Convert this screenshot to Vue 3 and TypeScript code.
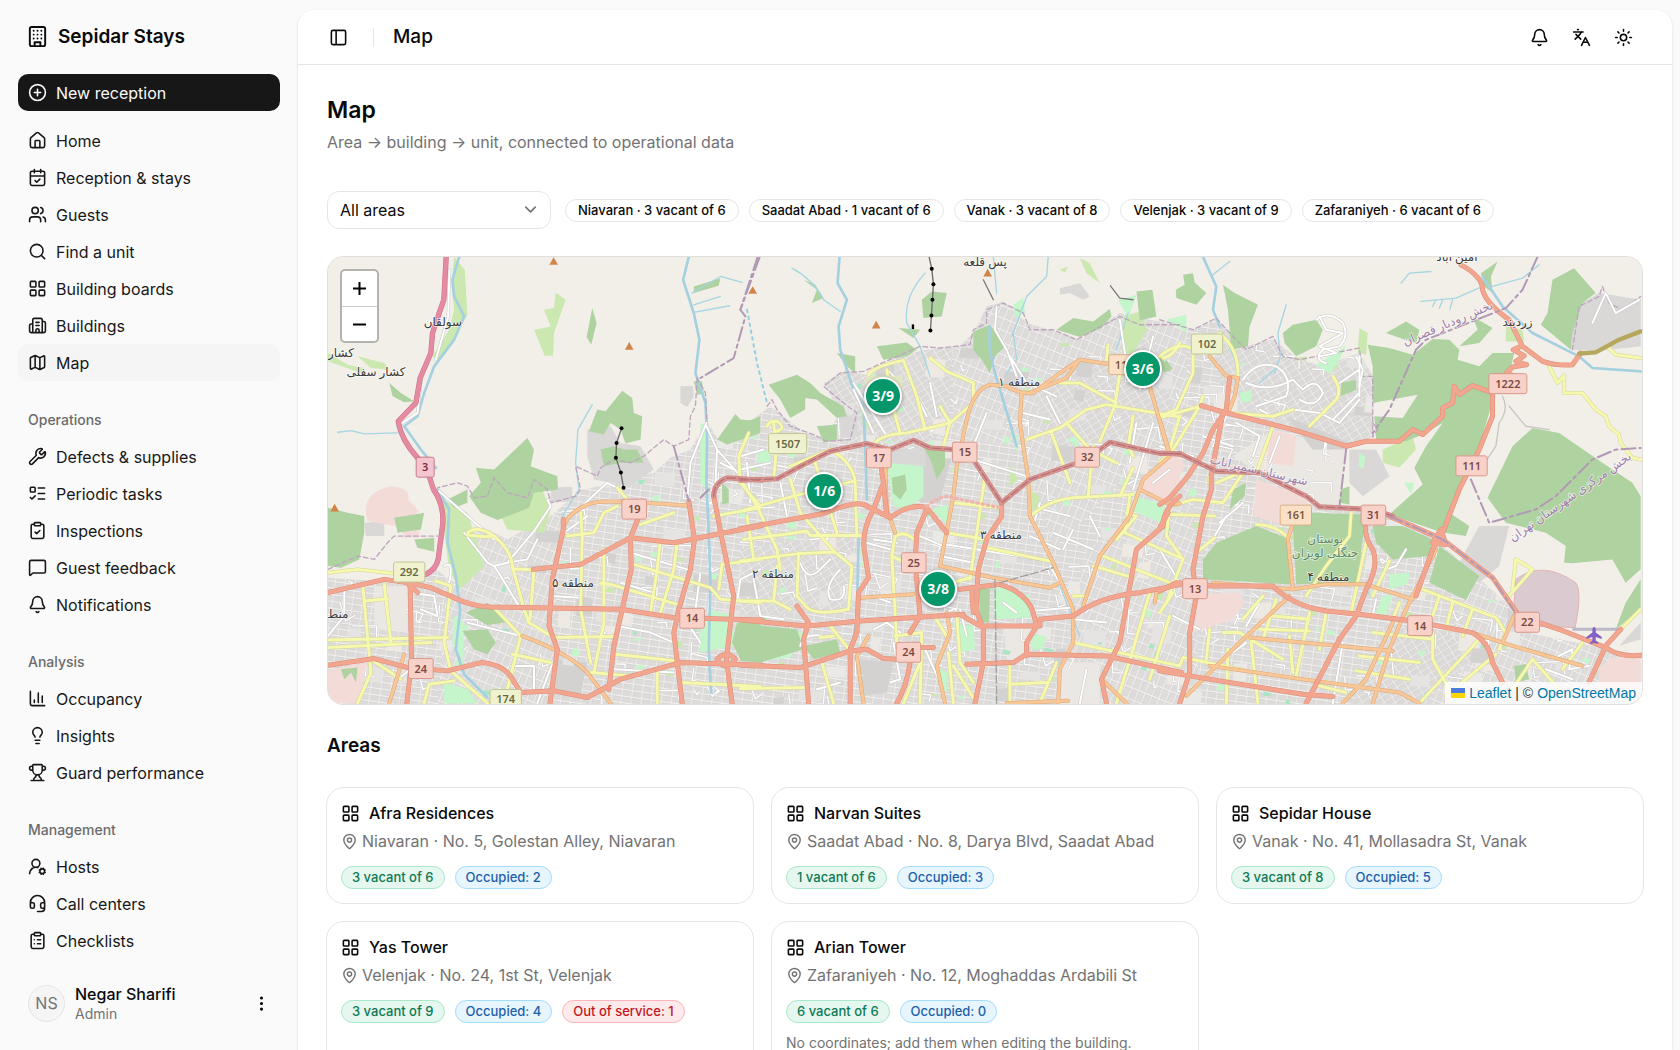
<script setup lang="ts">
import { h, ref } from 'vue'

const rr = (x: number, y: number, w: number, ht: number, r: number): string =>
  `M${x + r} ${y}h${w - 2 * r}a${r} ${r} 0 0 1 ${r} ${r}v${ht - 2 * r}a${r} ${r} 0 0 1 -${r} ${r}h-${w - 2 * r}a${r} ${r} 0 0 1 -${r} -${r}v-${ht - 2 * r}a${r} ${r} 0 0 1 ${r} -${r}z`
const circ = (x: number, y: number, r: number): string =>
  `M${x - r} ${y}a${r} ${r} 0 1 0 ${2 * r} 0a${r} ${r} 0 1 0 -${2 * r} 0`

const clipboard = `${rr(8, 2, 8, 4, 1)}M16 4h2a2 2 0 0 1 2 2v14a2 2 0 0 1-2 2H6a2 2 0 0 1-2-2V6a2 2 0 0 1 2-2h2`

const icons: Record<string, string> = {
  building: `${rr(4, 2, 16, 20, 2)}M9 22v-4h6v4M8 6h.01M16 6h.01M12 6h.01M12 10h.01M12 14h.01M16 10h.01M16 14h.01M8 10h.01M8 14h.01`,
  plus: `${circ(12, 12, 10)}M8 12h8M12 8v8`,
  home: 'M15 21v-8a1 1 0 0 0-1-1h-4a1 1 0 0 0-1 1v8M3 10a2 2 0 0 1 .709-1.528l7-5.999a2 2 0 0 1 2.582 0l7 5.999A2 2 0 0 1 21 10v9a2 2 0 0 1-2 2H5a2 2 0 0 1-2-2z',
  calendar: `M8 2v4M16 2v4${rr(3, 4, 18, 18, 2)}M3 10h18M9 16l2 2 4-4`,
  users: `M16 21v-2a4 4 0 0 0-4-4H6a4 4 0 0 0-4 4v2${circ(9, 7, 4)}M22 21v-2a4 4 0 0 0-3-3.87M16 3.13a4 4 0 0 1 0 7.75`,
  search: `M21 21l-4.34-4.34${circ(11, 11, 8)}`,
  grid: `${rr(3, 3, 7, 7, 1)}${rr(14, 3, 7, 7, 1)}${rr(14, 14, 7, 7, 1)}${rr(3, 14, 7, 7, 1)}`,
  buildings: 'M10 12h4M10 8h4M14 21v-3a2 2 0 0 0-4 0v3M6 10H4a2 2 0 0 0-2 2v7a2 2 0 0 0 2 2h16a2 2 0 0 0 2-2V9a2 2 0 0 0-2-2h-2M6 21V5a2 2 0 0 1 2-2h8a2 2 0 0 1 2 2v16',
  map: 'M14.106 5.553a2 2 0 0 0 1.788 0l3.659-1.83A1 1 0 0 1 21 4.619v12.764a1 1 0 0 1-.553.894l-4.553 2.277a2 2 0 0 1-1.788 0l-4.212-2.106a2 2 0 0 0-1.788 0l-3.659 1.83A1 1 0 0 1 3 19.381V6.618a1 1 0 0 1 .553-.894l4.553-2.277a2 2 0 0 1 1.788 0zM15 5.764v15M9 3.236v15',
  wrench: 'M14.7 6.3a1 1 0 0 0 0 1.4l1.6 1.6a1 1 0 0 0 1.4 0l3.106-3.105c.32-.322.863-.22.983.218a6 6 0 0 1-8.259 7.057l-7.91 7.91a1 1 0 0 1-2.999-3l7.91-7.91a6 6 0 0 1 7.057-8.259c.438.12.54.662.219.984z',
  todo: `${rr(3, 4, 6, 6, 1)}M3 17l2 2 4-4M13 5h8M13 12h8M13 19h8`,
  inspect: `${clipboard}M9 14l2 2 4-4`,
  message: 'M22 17a2 2 0 0 1-2 2H6.828a2 2 0 0 0-1.414.586l-2.202 2.202A.71.71 0 0 1 2 21.286V5a2 2 0 0 1 2-2h16a2 2 0 0 1 2 2z',
  bell: 'M10.268 21a2 2 0 0 0 3.464 0M3.262 15.326A1 1 0 0 0 4 17h16a1 1 0 0 0 .74-1.673C19.41 13.956 18 12.499 18 8A6 6 0 0 0 6 8c0 4.499-1.411 5.956-2.738 7.326',
  chart: 'M3 3v16a2 2 0 0 0 2 2h16M18 17V9M13 17V5M8 17v-3',
  bulb: 'M15 14c.2-1 .7-1.7 1.5-2.5 1-.9 1.5-2.2 1.5-3.5A6 6 0 0 0 6 8c0 1 .2 2.2 1.5 3.5.7.7 1.3 1.5 1.5 2.5M9 18h6M10 22h4',
  trophy: 'M10 14.66v1.626a2 2 0 0 1-.976 1.696A5 5 0 0 0 7 21.978M14 14.66v1.626a2 2 0 0 0 .976 1.696A5 5 0 0 1 17 21.978M18 9h1.5a1 1 0 0 0 0-5H18M4 22h16M6 9a6 6 0 0 0 12 0V3a1 1 0 0 0-1-1H7a1 1 0 0 0-1 1zM6 9H4.5a1 1 0 0 1 0-5H6',
  host: `${circ(10, 8, 5)}M2 21a8 8 0 0 1 10.434-7.62${circ(18, 18, 3)}M14.305 19.53l.923-.382M15.228 16.852l-.923-.383M16.852 15.228l-.383-.923M16.852 20.772l-.383.924M19.148 15.228l.383-.923M19.53 21.696l-.382-.924M20.772 16.852l.924-.383M20.772 19.148l.924.383`,
  headset: 'M3 11h3a2 2 0 0 1 2 2v3a2 2 0 0 1-2 2H5a2 2 0 0 1-2-2v-5Zm0 0a9 9 0 1 1 18 0m0 0v5a2 2 0 0 1-2 2h-1a2 2 0 0 1-2-2v-3a2 2 0 0 1 2-2h3ZM21 16v2a4 4 0 0 1-4 4h-5',
  checklist: `${clipboard}M12 11h4M12 16h4M8 11h.01M8 16h.01`,
  panel: `${rr(3, 3, 18, 18, 2)}M9 3v18`,
  languages: 'M5 8l6 6M4 14l6-6 2-3M2 5h12M7 2h1M22 22l-5-10-5 10M14 18h6',
  sun: `${circ(12, 12, 4)}M12 2v2M12 20v2M4.93 4.93l1.41 1.41M17.66 17.66l1.41 1.41M2 12h2M20 12h2M6.34 17.66l-1.41 1.41M19.07 4.93l-1.41 1.41`,
  pin: `M20 10c0 4.993-5.539 10.193-7.399 11.799a1 1 0 0 1-1.202 0C9.539 20.193 4 14.993 4 10a8 8 0 0 1 16 0${circ(12, 10, 3)}`,
  more: `${circ(12, 12, 1)}${circ(12, 5, 1)}${circ(12, 19, 1)}`,
  chevron: 'M6 9l6 6 6-6',
}

const Icon = (props: { name: string; size?: number }) =>
  h(
    'svg',
    {
      width: props.size ?? 19,
      height: props.size ?? 19,
      viewBox: '0 0 24 24',
      fill: 'none',
      stroke: 'currentColor',
      'stroke-width': 2,
      'stroke-linecap': 'round',
      'stroke-linejoin': 'round',
      'aria-hidden': 'true',
      class: 'icon',
    },
    [h('path', { d: icons[props.name] })],
  )
Icon.props = ['name', 'size']

interface NavItem { icon: string; label: string }
interface NavGroup { title?: string; items: NavItem[] }

const groups: NavGroup[] = [
  {
    items: [
      { icon: 'home', label: 'Home' },
      { icon: 'calendar', label: 'Reception & stays' },
      { icon: 'users', label: 'Guests' },
      { icon: 'search', label: 'Find a unit' },
      { icon: 'grid', label: 'Building boards' },
      { icon: 'buildings', label: 'Buildings' },
      { icon: 'map', label: 'Map' },
    ],
  },
  {
    title: 'Operations',
    items: [
      { icon: 'wrench', label: 'Defects & supplies' },
      { icon: 'todo', label: 'Periodic tasks' },
      { icon: 'inspect', label: 'Inspections' },
      { icon: 'message', label: 'Guest feedback' },
      { icon: 'bell', label: 'Notifications' },
    ],
  },
  {
    title: 'Analysis',
    items: [
      { icon: 'chart', label: 'Occupancy' },
      { icon: 'bulb', label: 'Insights' },
      { icon: 'trophy', label: 'Guard performance' },
    ],
  },
  {
    title: 'Management',
    items: [
      { icon: 'host', label: 'Hosts' },
      { icon: 'headset', label: 'Call centers' },
      { icon: 'checklist', label: 'Checklists' },
    ],
  },
]

const area = ref('All areas')
const areas = [
  { name: 'Niavaran', vacant: 3, total: 6 },
  { name: 'Saadat Abad', vacant: 1, total: 6 },
  { name: 'Vanak', vacant: 3, total: 8 },
  { name: 'Velenjak', vacant: 3, total: 9 },
  { name: 'Zafaraniyeh', vacant: 6, total: 6 },
]

interface Building { name: string; address: string; vacant: string; occupied: number; out?: number; note?: string }
const buildings: Building[] = [
  { name: 'Afra Residences', address: 'Niavaran · No. 5, Golestan Alley, Niavaran', vacant: '3 vacant of 6', occupied: 2 },
  { name: 'Narvan Suites', address: 'Saadat Abad · No. 8, Darya Blvd, Saadat Abad', vacant: '1 vacant of 6', occupied: 3 },
  { name: 'Sepidar House', address: 'Vanak · No. 41, Mollasadra St, Vanak', vacant: '3 vacant of 8', occupied: 5 },
  { name: 'Yas Tower', address: 'Velenjak · No. 24, 1st St, Velenjak', vacant: '3 vacant of 9', occupied: 4, out: 1 },
  { name: 'Arian Tower', address: 'Zafaraniyeh · No. 12, Moghaddas Ardabili St', vacant: '6 vacant of 6', occupied: 0, note: 'No coordinates; add them when editing the building.' },
]

/* Map geometry: three tiles side by side, each with its own origin. */
const tiles = [0, 1260, 2520]
const urban =
  'M21 985L240 1000L345 960L400 1000L470 900L440 860L480 830L560 870L690 800L780 722L880 700L1000 670L1050 625L1110 600L1160 515L1200 580L1350 470L1440 540L1510 570L1560 490L1510 400L1580 360L1650 380L1730 320L1820 300L1920 290L1960 250L2000 170L2050 155L2120 220L2220 250L2280 270L2400 190L2440 200L2540 220L2620 240L2690 210L2780 290L2860 270L2940 330L3010 350L3120 310L3160 380L3160 560L3080 600L3060 770L3220 800L3350 870L3560 1060L3620 1150L3965 1220L3965 1370L21 1370Z'

const wood: string[][] = [
  [
    'M620 565L640 600 630 650 710 680 712 720 640 730 625 775 530 812 480 790 445 740 480 700 465 655 520 660Z',
    'M905 423L935 445 940 490 965 500 960 570 915 582 900 540 870 520 850 555 805 545 830 480 855 485Z',
    'M880 590L910 600 950 600 970 640 900 640 850 650 840 600Z',
    'M21 775L80 790 130 800 130 850 115 930 60 955 21 950Z', 'M220 805L280 795 310 790 300 840 230 850Z',
    'M280 870L340 865 340 907 290 895Z', 'M435 1090L500 1060 560 1118 500 1128Z', 'M425 1145L500 1140 525 1180 500 1215 460 1200Z',
    'M1190 570L1245 493 1270 520 1320 500 1320 550 1220 585Z', 'M1120 395L1145 395 1150 432 1130 435Z',
    'M1250 1120L1320 1120 1320 1235 1260 1230 1235 1180Z', 'M1205 700L1225 720 1225 760 1205 765Z',
    'M1120 110L1200 85 1195 108 1120 130Z', 'M380 750L440 720 440 760 400 775Z', 'M815 175L828 220 812 285 798 262Z',
    'M205 400L240 430 280 455 250 458 215 440Z', 'M60 1260L110 1255 105 1300 90 1270 70 1290Z',
  ],
  [
    'M85 405L170 375 210 400 240 430 310 470 320 500 290 505 230 450 195 445 195 480 150 505 120 450Z',
    'M700 245L750 225 795 290 765 320 750 370 725 330 700 300Z', 'M0 510L60 515 50 550 0 565Z',
    'M230 530L290 525 290 570 250 580Z', 'M575 125L620 130 605 200 550 205 545 150Z', 'M190 90L225 105 250 145 215 160 230 120Z',
    'M950 240L1000 205 1060 215 1110 178 1115 200 1085 235 1020 262Z', 'M1190 125L1238 120 1250 200 1200 212Z',
    'M0 1120L70 1130 170 1140 190 1200 60 1240 0 1235Z', 'M190 1190L290 1170 300 1210 220 1230Z', 'M410 290L500 278 530 300 500 320 430 330Z',
    'M715 1010L750 1020 747 1120 720 1120Z', 'M550 590L615 590 615 650 590 690 575 640Z', 'M455 685L495 675 500 720 480 750 458 730Z',
    'M475 235L540 240 520 265Z', 'M290 310L345 320 345 370 320 350Z', 'M1280 330L1300 360 1270 345Z',
  ],
  [
    'M625 285L690 295 760 315 820 268 870 270 900 300 895 330 960 350 1000 310 1065 310 1050 375 1000 430 990 490 960 590 905 700 850 850 690 795 790 705 765 655 800 590 850 520 790 555 740 575 650 570 645 500 730 505 775 435 640 460 640 350Z',
    'M985 745L1060 590 1120 535 1200 550 1330 640 1420 700 1445 740 1445 960 1400 1000 1360 930 1240 942 1215 940 1220 890 1160 850 1040 820Z',
    'M1180 90L1245 55 1310 130 1270 160 1240 250 1235 300 1145 225 1165 190Z', 'M190 105L225 130 295 165 270 230 265 290 215 300 205 180Z',
    'M370 250L400 225 470 210 490 240 470 290 410 320 375 280Z', 'M70 75L100 70 105 98 140 130 110 165 50 145 48 120 75 105Z',
    'M680 250L740 215 780 240 770 282Z', 'M940 200L1000 235 960 280 900 290 955 240Z', 'M130 930L170 880 290 830 380 865 395 1005 130 990Z',
    'M450 790L620 795 605 900 600 1000 410 1005 400 830Z', 'M640 830L730 830 820 870 810 920 700 930 650 880Z',
    'M840 890L960 980 920 1052 810 1000Z', 'M1370 1140L1400 1060 1445 990 1445 1080Z', 'M0 320L35 360 15 370 0 350Z',
    'M855 850L870 790 930 830 920 860Z', 'M545 400L590 390 590 420 545 440Z', 'M1065 1250L1100 1245 1110 1290 1070 1300Z',
    'M965 70L1015 35 995 80 1000 130 975 110Z', 'M545 720L570 710 570 765 540 760Z', 'M220 720L260 700 255 740 210 780Z',
  ],
]
const grass: string[][] = [
  [
    'M355 740L400 770 440 790 470 880 490 950 440 1000 415 1020 385 960Z', 'M400 21L432 60 440 195 400 270 350 335 335 320 385 240 400 180 392 100Z',
    'M705 128L735 150 700 250 697 318 672 318 640 240 690 230 670 180 700 175Z', 'M600 740L660 710 690 780 670 850 560 840 540 800Z',
    'M110 320L190 340 205 360 150 355Z', 'M21 310L80 345 130 355 120 370 21 335Z',
  ],
  ['M1150 200L1200 185 1222 240 1180 310 1148 310Z', 'M960 60L985 50 975 68Z', 'M1020 25L1050 40 1080 100 1040 70Z', 'M350 430L400 540 370 530Z', 'M870 720L900 740 900 780 875 780Z', 'M810 650L835 690 810 710Z'],
  ['M600 235L625 250 620 315 595 310Z', 'M1040 230L1090 240 1095 275 1040 275Z', 'M670 600L760 560 770 600 720 655 670 640Z', 'M400 325L440 320 440 335Z'],
]
const park: string[][] = [
  ['M1170 1080L1238 1100 1240 1190 1140 1210 1135 1160Z', 'M1140 520L1165 530 1160 720 1140 700Z', 'M370 1300L440 1320 470 1362 370 1362Z', 'M400 1100L430 1120 430 1240 395 1180Z', 'M940 900L965 930 945 940Z'],
  [
    'M440 640L550 650 550 740 500 780 460 770Z', 'M1185 740L1275 765 1262 820 1180 785Z', 'M820 165L850 145 855 190 825 205Z', 'M780 1010L870 1040 870 1105 765 1110 760 1030Z',
    'M640 1120L700 1130 705 1200 665 1210Z', 'M870 1155L920 1160 910 1200 875 1200Z', 'M1135 150L1190 135 1165 205Z', 'M980 570L1010 560 1020 600Z', 'M50 610L90 600 90 640 50 640Z',
    'M60 1145L190 1150 150 1225 60 1235Z', 'M575 780L620 765 625 830Z', 'M600 1260L625 1270 620 1330 598 1310Z', 'M810 540L835 560 830 610Z',
  ],
  ['M470 345L560 288 540 330 510 372Z', 'M690 975L750 970 745 1005 690 1020Z', 'M20 210L80 195 80 248Z', 'M240 430L275 420 275 455 245 460Z', 'M670 1040L700 1035 680 1100 650 1090Z', 'M0 770L15 770 10 830 0 830Z', 'M600 610L618 620 612 658 597 650Z', 'M735 700L765 700 755 735Z'],
]
const pink: string[][] = [
  ['M140 815Q115 730 210 710Q270 715 262 750L295 785 230 832Z', 'M21 1262L140 1240 110 1362 21 1362Z', 'M245 845L295 840 295 865 250 865Z'],
  ['M1210 690L1320 625 1320 720 1262 755 1200 725Z'],
  ['M335 540L410 558 400 650 320 640Z', 'M290 690L440 742 455 790 360 822 282 800Z', 'M0 622L60 615 75 650 30 740 0 755Z', 'M115 1035L240 1030 255 1060 220 1110 105 1148Z', 'M1320 1255L1360 1225 1445 1220 1445 1362 1320 1320Z'],
]
const grey: string[][] = [
  ['M1080 410L1118 408 1120 440 1100 472 1080 460Z', 'M800 540L870 530 900 580 960 590 1000 660 930 710 820 690 800 620Z', 'M690 715L755 712 755 755 690 760Z', 'M130 820L190 815 190 860 135 860Z'],
  ['M960 115L1020 100 1050 140 1030 150 990 130 960 135Z', 'M300 500L350 495 355 560 300 565Z', 'M450 610L550 590 560 650 450 650Z'],
  ['M1240 240L1260 165 1320 130 1445 150 1445 290 1310 305 1235 300Z', 'M570 600L650 600 690 680 610 740 570 700Z', 'M960 830L1050 830 1020 950 960 1000 900 940Z', 'M1380 1190L1445 1120 1445 1170Z'],
]

const river: string[][] = [
  ['M415 21L395 90 400 140 430 200 400 270 340 350 310 430 290 500 250 530 300 600 345 655', 'M350 720L385 780 380 880 405 980 418 1080 405 1200 430 1275 500 1345', 'M1105 21L1088 90 1120 190 1137 270 1125 370 1155 460 1160 560 1158 700 1165 850 1170 1000 1165 1200 1172 1330'],
  ['M298 21L292 100 320 150 295 230 300 300 340 420 370 470 375 600 380 750', 'M355 870L350 1100 335 1200', 'M750 230Q740 300 780 420L810 520 830 590'],
  ['M130 21L170 110 160 180 180 230', 'M970 80L1030 170 1120 250 1260 320 1300 355 1445 365'],
]
const stream: string[][] = [
  ['M815 465L772 540 765 640 775 720 725 800', 'M50 548L90 543 130 553 230 550', 'M1115 130L1200 80 1265 98', 'M1120 165L1200 140M1120 188L1228 168'],
  ['M155 55Q220 90 250 150L300 185', 'M555 70Q490 140 500 220L540 290 570 380', 'M925 21L920 80 860 140 835 210 815 260', 'M760 21L770 130', 'M1165 190L1130 300', 'M820 250L830 330 800 370', 'M960 1010L1020 1160'],
  ['M380 165L355 250 362 320 345 370', 'M785 155L890 145 965 112M830 150L820 170M850 152L840 175M880 148L872 178', 'M725 100L750 70 815 65', 'M1000 110L1090 85 1140 45', 'M210 35L160 75', 'M190 250L230 340', 'M355 350L300 400'],
]

const minor: string[][] = [
  [
    'M355 725L440 800 520 870M430 850L500 940 520 950 560 940 640 845 690 770 680 750M520 950L540 980 600 1080M560 940L620 930 650 870',
    'M800 800L730 850M730 820L860 700 900 720M1158 520L1110 640 1100 760M1158 530L1190 600 1185 700M1190 600L1260 680M1200 640L1240 660',
    'M21 1160L70 1100 70 1020M270 1030L340 1040 350 1100 300 1080M370 950Q400 930 385 1000M160 1230L230 1290 270 1260M440 1120L600 1160M690 1040L780 1045M700 1230L650 1362',
    'M930 910L1100 960M1100 1120L1140 1180M890 1130L990 1150 1060 1180M900 1000L1000 1030M1140 970L1120 1120M1250 1060L1260 990 1320 960M880 1260L1060 1270M570 1250L640 1250 640 1330',
    'M386 60L382 200 345 330M230 530L290 490 300 400',
  ],
  [
    'M20 640L30 760M0 660L90 640M0 620L70 600M120 700L140 800M180 940Q200 1000 240 960L270 930M300 960Q250 1010 270 1050 320 1060 310 1010M40 990L60 1100 130 1110',
    'M340 420L400 550M340 400L440 560M570 400L590 500M520 420L560 500 M400 870L470 880M380 880L450 900M770 170L765 240 800 300 830 380M810 320L860 400 950 440M920 440L960 520M850 490L930 510',
    'M740 490L700 590M700 630L860 680M900 760L880 830M910 780L990 800M1000 840L970 900M940 850L1060 900M870 860L960 900 M930 950L960 1000M870 1085L990 1075M1050 800L1080 860',
    'M620 885L930 935M540 860L610 890M600 920L700 940M660 1080L680 1160M400 1140L440 1120 480 1150M180 1190Q190 1150 250 1160M450 1300L480 1290 460 1180M555 1200L600 1300M1140 210L1160 340',
    'M1240 260L1200 420M1190 520L1170 640M1240 520L1180 720M1290 660L1240 700M1000 1110L1100 1120M1040 1260L1020 1362M230 1320L300 1300M400 1040L450 1060M790 1060L830 1090',
  ],
  [
    'M250 390Q290 330 350 350 400 380 380 440L290 470M260 400Q330 430 400 390L430 420Q470 380 490 430 470 480 420 450M400 480L480 490 540 520 600 450M300 480L340 500M540 400L600 360M600 320L600 440',
    'M470 210Q510 180 550 220 570 260 540 290L490 300Q460 330 500 340M480 200L500 240 550 250 480 290 530 310 480 320', 'M590 320L610 360 600 410M600 430L520 510M130 560L220 590M0 590L100 620M200 500L160 590M230 520L300 560 280 620',
    'M180 820L250 760M165 860L200 800M0 900L60 1000M40 1100L120 1140M300 1060L260 1130M550 1180L520 1362M1180 1230L1240 1200 1230 1260 1290 1250M1160 1260L1240 1290M740 900L710 950 680 960M260 1180L220 1210M650 1050L640 1100',
    'M1300 220L1340 130 1370 190 1440 150M360 560L330 640',
  ],
]
const yellow: string[][] = [
  [
    'M21 970L110 960 240 975', 'M21 1172L380 1165', 'M21 1195L330 1180', 'M125 1005L150 1270 110 1362', 'M190 1005L210 1180', 'M130 1055L200 1048', 'M390 1010L370 1180 390 1265 500 1362M345 995L390 1010',
    'M440 850Q470 825 520 860 570 900 575 950L610 1080 625 1120 700 1165 880 1162', 'M440 857L490 862 520 860', 'M575 958L640 962 628 1110', 'M520 1075L600 1160 560 1320', 'M780 790L785 860 780 1080 810 1240',
    'M740 860L820 850 850 790 890 770', 'M850 900L850 1120 820 1270', 'M840 1002L870 1005 1070 1065', 'M940 945L1170 1015 1200 1050 1320 1060', 'M1020 870L1010 960 990 1090', 'M1070 880L1060 960 1020 1090',
    'M885 1215L1070 1235', 'M810 1270L930 1280', 'M575 1215L690 1240', 'M1010 1260L1010 1362', 'M1080 1300L1320 1312', 'M1285 550L1255 620 1260 700 1320 770', 'M1180 800L1320 775', 'M1205 945L1320 930', 'M890 715L920 750', 'M960 825L1060 790', 'M310 1362L325 1305 400 1295', 'M150 1230L240 1290',
    'M1205 945L1195 1020',
  ],
  [
    'M0 690L50 770 110 900 120 960', 'M0 785L160 740 340 695', 'M10 870L130 855 200 845 210 858 362 858', 'M0 935L180 912 285 908 335 950 325 1080Q230 1100 200 1075L170 1040 175 910', 'M100 520L108 600 100 690M80 530Q90 510 110 515 140 535 110 545', 'M150 690L180 790 285 910',
    'M150 650L270 600Q340 640 345 700L350 860', 'M225 640L290 850', 'M20 800L40 930', 'M0 1055L100 1055 110 950', 'M100 1055L150 1080', 'M385 375Q400 350 490 332L530 440 555 540', 'M440 360Q450 450 480 550', 'M400 590Q410 555 500 550L630 520 700 460 700 400',
    'M570 325L620 365 700 400', 'M600 470L630 520 610 590', 'M860 570L960 535 1040 480 1100 465 1320 502', 'M1105 285L1100 330', 'M1140 370L1125 470 1080 575', 'M980 520L1050 600 1130 640', 'M935 550L990 700', 'M1060 590L1045 740', 'M870 800Q930 750 1000 745L1180 735', 'M1180 655L1140 740',
    'M960 400L1020 400 1130 460', 'M735 680L690 990', 'M640 760L780 775', 'M620 850L740 870', 'M740 895L930 935', 'M465 860L455 920 470 1180', 'M455 920L520 950', 'M465 860Q500 840 530 880', 'M465 1160L545 1150 540 1362', 'M580 1095L625 1170 600 1220', 'M650 1090L660 1240 700 1300', 'M625 1210L640 1362', 'M0 1318L200 1315',
    'M245 1240L280 1362', 'M270 1130L330 1205M240 1165L280 1160', 'M810 1240L810 1362', 'M1000 1180L1320 1250', 'M950 1240L900 1362', 'M810 1305L920 1300', 'M1170 740L1155 850 1320 925', 'M1160 790L1190 800M1190 800L1130 870', 'M1060 950L1180 985', 'M1090 920L1290 1000', 'M1230 1030L1180 1200 1130 1362', 'M1290 1100L1230 1290', 'M1320 500L1290 600', 'M1270 325Q1300 320 1320 280', 'M540 1240L490 1362M640 1250L710 1362M1180 500L1165 590 1180 620M690 985L640 1000M1000 1040L1040 1040',
  ],
  [
    'M0 320Q60 270 100 300L100 370 50 480 0 500', 'M180 250Q240 300 235 385', 'M0 505L120 470 130 440', 'M120 470L40 600 0 640', 'M340 530L290 670', 'M210 490L340 500 400 480', 'M520 380Q550 420 530 450L450 530', 'M250 670L190 760 100 750 30 770 20 860 70 930 20 1060', 'M35 795L165 800', 'M165 865L110 910',
    'M290 825Q350 825 390 870', 'M575 790L570 860 500 950 440 1040', 'M620 880L575 1090', 'M690 935L640 1040', 'M790 1020L1010 1105 1040 1150 1020 1200', 'M840 1040L810 1130', 'M880 1060L860 1140', 'M940 1080L910 1160', 'M1070 930L1060 1020M1070 930L1120 960 1045 1045',
    'M1170 350L1195 400 1215 378 1215 430 1270 430 1310 480 1340 500 1350 530 1380 555 1385 580 1420 625 1445 630', 'M1345 290L1370 315 1445 325', 'M1445 1080L1385 1140', 'M310 1040L250 1110', 'M350 1050L310 1170', 'M450 1090L410 1280', 'M340 1100L450 1110', 'M300 1140L450 1145', 'M500 1090L480 1200', 'M190 1150L240 1150 370 1230',
    'M60 1250L70 1225 250 1262', 'M275 1180L295 1362', 'M205 1200L200 1362', 'M820 1150L820 1230 870 1320', 'M640 1150L820 1170', 'M600 1220L780 1240', 'M590 1265L750 1290', 'M960 1170L780 1362', 'M1010 1215L860 1340', 'M1120 1230L1060 1320', 'M1120 1230L1200 1320', 'M1270 1180L1210 1260', 'M150 1140L140 1230', 'M390 1160L400 1270M720 1060L700 1110M0 1090L40 1030', 'M170 700L240 670M150 680L150 700', 'M480 1310L560 1330',
  ],
]
const orange: string[][] = [
  ['M900 757Q820 752 790 770 740 795 730 830', 'M900 755L1100 768', 'M250 1215L205 1362', 'M605 1160Q740 1210 800 1270L870 1362'],
  [
    'M845 430L840 520 865 690 870 800 940 940 1000 1080 1000 1180 960 1260 955 1362', 'M600 950L640 740 650 650 680 510Q700 420 750 405L800 410Q840 435 880 430L960 370 1020 330 1120 345', 'M870 430L980 385 1015 335', 'M600 950L760 985 930 1015 960 1000', 'M360 1045L520 1035',
    'M435 650L440 780 465 850', 'M1230 410L1290 620 1210 690 1170 800 1080 920 1030 1070', 'M1200 720L1290 765 1320 762', 'M385 1160L350 1220 370 1362', 'M620 1090L630 1150 590 1250 615 1362', 'M800 1362L985 1355M1085 1290L1160 1362M1320 1000L1250 1030 1245 1060',
  ],
  ['M150 320L200 380 235 385 225 440 205 490', 'M400 820L385 870 400 1020', 'M160 1000L400 1020 500 1005 620 1005 760 1050', 'M830 900L740 1080 690 1200 640 1362', 'M390 1040L240 1180 80 1340', 'M270 1165L700 1205', 'M700 1120L620 1290 550 1362', 'M940 1150L1060 1190 1270 1250', 'M150 1250L430 1290 720 1330 780 1362', 'M1065 1100L1030 1180', 'M0 510L28 605'],
]
const trunk: string[][] = [
  [
    'M21 1030L190 990 262 1000 330 1015 400 1045Q450 1070 510 1073L900 1080 1060 1105 1325 1112', 'M268 1010L272 1240 258 1362', 'M21 1248L160 1228 260 1255 380 1265 480 1240Q550 1245 575 1290L600 1330 700 1325 800 1345 900 1290 1080 1240 1325 1248',
    'M638 960L780 945 930 865 1060 880 1325 828', 'M728 810L728 840 695 990 685 1130 710 1200 688 1362', 'M930 865L932 960 905 1080 880 1190 865 1320', 'M1105 755L1122 870 1110 960 1075 1080 1060 1150 1085 1362', 'M1180 740L1205 870 1240 1040 1218 1230 1235 1362', 'M955 800L930 865', 'M240 985L290 1030M1190 1230Q1218 1200 1245 1230 1218 1270 1190 1230',
  ],
  [
    'M0 838L250 792Q340 755 370 765L450 805', 'M420 640L430 700 400 780Q365 840 372 900L385 985 355 1030 350 1150 330 1200 330 1362', 'M430 700L440 800 370 765', 'M450 805Q510 760 560 775L620 850', 'M560 780L530 850 525 940 540 1100 510 1150', 'M785 760L785 800 740 870 715 960 708 1080 730 1140 730 1240 705 1362',
    'M660 1020L780 1005Q860 1030 880 1090L890 1130 860 1180 860 1220', 'M660 1095L720 1130 900 1130 900 1110 1000 1100Q1080 1040 1200 1030L1325 1005', 'M680 1245L820 1240 860 1215 1100 1220 1325 1270', 'M0 1248L180 1255 330 1205 380 1200 430 1228 470 1230', 'M510 1240Q500 1310 470 1362', 'M170 1070L205 1120 190 1170 205 1362',
    'M1320 740Q1270 780 1270 830L1190 900 1165 1040 1140 1180 1085 1290 1100 1362', 'M0 1112L200 1130 360 1115 670 1095', 'M540 1195L580 1195', 'M695 1020L700 1090',
  ],
  [
    'M125 468L200 490 400 540 560 590 620 575 720 575 760 540 790 555 850 500 850 475 880 460 885 410 900 435 940 408 1000 430 1000 500 960 600 900 720 850 850 820 900 770 1040', 'M210 385L200 480 160 540 130 610 85 680 30 745 0 765', 'M190 490L165 620 155 680 155 720 130 800 100 960 110 1040 90 1150 90 1270 60 1362',
    'M0 1025L50 1000 160 1010 340 1010Q400 1070 500 1085L600 1095 760 1115 940 1150Q990 1180 1000 1240L1030 1300', 'M620 800Q610 860 640 900 660 950 620 1020L590 1100 540 1170 440 1362', 'M690 800L850 870 1000 985 1080 1100 1200 1140 1340 1195Q1380 1225 1445 1218', 'M1385 1140L1340 1190 1290 1300',
    'M905 45Q970 80 970 120 980 160 1050 210L1090 290 1150 335Q1200 350 1240 345L1265 310', 'M0 1265L180 1295 430 1335 520 1342', 'M1085 290L1062 300 1095 318 1070 335 1102 345 1060 352 1040 372 1065 378', 'M0 835L25 790', 'M845 840L820 880 860 885Z',
  ],
]
const motorway: string[][] = [['M376 21L369 150 355 190 335 250 330 310 298 385 285 460 232 515Q240 570 290 625L315 650 338 720Q372 770 365 830L352 930Q345 960 315 975'], [], []]
const express: string[][] = [
  ['M1180 740Q1180 700 1220 685L1325 692'],
  ['M0 692L110 688 200 640 270 605 380 582 450 600 520 572 570 595 640 600 700 630 785 760 870 690 1040 630 1110 578 1250 610 1325 614'],
  ['M0 612L60 612 170 665 300 670 440 740 480 772 640 780 700 800'],
]
const border: string[][] = [
  ['M1318 21L1260 180 1275 200 1240 325 1140 385', 'M1060 590L1105 755', 'M1140 745L1165 720'],
  ['M52 21L0 180'],
  ['M1135 21L1090 120 1040 175 800 270 770 300 690 480 640 550', 'M935 690L990 820 1130 780 1190 740 1300 630 1370 600 1445 595', 'M560 600L540 770', 'M690 800L850 870 1000 985 1065 1085'],
]
const fineBorder: string[][] = [
  ['M1130 385L1125 470 1110 500 1105 570 1060 590 1030 570 970 620 930 640 880 630 840 655 830 680 765 650 780 720 765 740 690 760 680 720 640 690 620 745 560 730 520 685 500 740 460 745 440 710 410 700 350 715', 'M21 960L110 920 160 930 200 880 220 860 350 860', 'M1130 385L1155 430 1160 520'],
  ['M80 470L95 450 110 480 150 530 220 555 260 575 330 570 350 490 310 460 250 410 300 370 370 365 460 325 540 290 600 295 690 285 700 240 740 220 740 180 790 160 850 190 870 240 940 240 1010 270 1140 200 1200 225 1320 225'],
  ['M0 210L100 240 170 205 210 250 260 300 340 260 370 320 420 330 600 295 610 380 640 380 640 580', 'M1240 300L1260 170 1320 140 1330 110 1350 160 1390 180 1445 140', 'M640 520L655 540 640 560'],
]

const pick = (o: number) => `translate(${o} 0)`
const landcover = [
  { fill: '#d9d8d7', sets: grey }, { fill: '#f3dcd8', sets: pink }, { fill: '#cbe8b0', sets: grass },
  { fill: '#c4f5cb', sets: park }, { fill: '#afd2a1', sets: wood },
]
const roads = [
  { edge: '#c9c7c6', fill: '#ffffff', w: 6, sets: minor },
  { edge: '#d3d59a', fill: '#f6f8ae', w: 9, sets: yellow },
  { edge: '#dba573', fill: '#f9c797', w: 9, sets: orange },
  { edge: '#dd8d79', fill: '#f3a68f', w: 12, sets: trunk },
  { edge: '#c98583', fill: '#d8938c', w: 12, sets: express },
  { edge: '#cf6f8a', fill: '#e58ba1', w: 13, sets: motorway },
]

/* Small neighbourhood patches and side streets scattered over the city. */
let seed = 7
const rand = (): number => {
  seed = (seed * 16807) % 2147483647
  return seed / 2147483647
}
const shades = ['#c4f5cb', '#d3d2d1', '#ebe9e6', '#c4f5cb', '#cbe8b0', '#e6e4e2', '#efe9e4', '#a9e6c4']
const patches = Array.from({ length: 340 }, () => {
  const x = Math.round(40 + rand() * 3900)
  const y = Math.round(240 + rand() * 1110)
  const shade = Math.floor(rand() * shades.length)
  const big = shade === 1 || shade === 2 || shade === 5 || shade === 6
  const w = Math.round((big ? 24 : 9) + rand() * (big ? 50 : 16))
  const t = Math.round((big ? 20 : 8) + rand() * (big ? 36 : 14))
  return { d: `M${x} ${y}l${w} ${Math.round(rand() * 12 - 4)} ${-Math.round(rand() * 8)} ${t}-${w}-4z`, fill: shades[shade] }
})
const lanes = Array.from({ length: 330 }, () => {
  const x = Math.round(40 + rand() * 3900)
  const y = Math.round(240 + rand() * 1110)
  const a = Math.round(rand() * 70 + 10)
  const b = Math.round(rand() * 24 - 6)
  return rand() > 0.5 ? `M${x} ${y}l${a} ${b} ${-b} ${Math.round(a / 2)}` : `M${x} ${y}l${b} ${a} ${Math.round(a / 2)} ${-b}`
}).join('')

type Shield = [number, number, string, string]
const shields: Shield[] = [
  [313, 653, '3', 'm'], [265, 968, '292', 'y'], [941, 779, '19', 't'], [1115, 1107, '14', 't'], [300, 1258, '24', 't'], [555, 1351, '174', 'y'],
  [1402, 582, '1507', 'y'], [1676, 625, '17', 't'], [1934, 608, '15', 't'], [2302, 623, '32', 't'], [1781, 940, '25', 't'], [1765, 1209, '24', 't'], [2404, 345, '11', 'o'],
  [2662, 283, '102', 'y'], [3566, 402, '1222', 't'], [3457, 649, '111', 't'], [2929, 797, '161', 'o'], [3162, 797, '31', 't'], [2626, 1018, '13', 't'], [3302, 1129, '14', 't'], [3624, 1119, '22', 't'],
]
const shieldColors: Record<string, string[]> = {
  m: ['#f3c6cf', '#c9778c', '#7d2a43'], t: ['#f8d2c9', '#d9988b', '#7d4a44'],
  y: ['#f0f2cf', '#c3c794', '#666b45'], o: ['#fae0c4', '#d8b185', '#7a5836'],
}
const peaks = [[699, 34], [926, 289], [1297, 121], [41, 775], [1668, 225], [2003, 69]]
const lifts = ['M903 536L888 580 886 625 901 669 909 715', 'M1827 21L1835 57 1840 103 1837 150 1834 197 1831 242']
const liftDots = [[903, 536], [888, 580], [886, 625], [901, 669], [909, 715], [1835, 57], [1840, 103], [1837, 150], [1834, 197], [1831, 242]]

type Place = [number, number, string]
const places: Place[] = [
  [366, 228, 'سولقان'], [60, 322, 'کشار'], [165, 380, 'کشار سفلی'], [757, 1012, 'منطقه ۵'], [10, 1106, 'منطقه ۲۱'],
  [1995, 50, 'پس قلعه'], [2098, 409, 'منطقه ۱'], [2043, 870, 'منطقه ۳'], [1358, 985, 'منطقه ۲'],
  [3413, 34, 'امین آباد'], [3595, 228, 'زردبند'], [3027, 995, 'منطقه ۴'],
]

const markers = [
  { left: 544, top: 139, label: '3/9' },
  { left: 804, top: 112, label: '3/6' },
  { left: 485, top: 235, label: '1/6' },
  { left: 599, top: 333, label: '3/8' },
]
const pos = (m: { left: number; top: number }) => ({ left: `${(m.left / 1316) * 100}%`, top: `${(m.top / 448) * 100}%` })
</script>

<template>
  <div class="app">
    <aside class="sidebar">
      <div class="brand"><Icon name="building" :size="23" /><span>Sepidar Stays</span></div>
      <button class="new" type="button"><Icon name="plus" />New reception</button>
      <nav>
        <section v-for="(g, i) in groups" :key="i" class="group">
          <h2 v-if="g.title">{{ g.title }}</h2>
          <a v-for="it in g.items" :key="it.label" href="#" :class="{ active: it.label === 'Map' }">
            <Icon :name="it.icon" />{{ it.label }}
          </a>
        </section>
      </nav>
      <div class="user">
        <span class="avatar">NS</span>
        <span class="who"><strong>Negar Sharifi</strong><small>Admin</small></span>
        <button type="button" aria-label="Account menu"><Icon name="more" /></button>
      </div>
    </aside>

    <main class="panel">
      <header class="bar">
        <button type="button" aria-label="Toggle sidebar"><Icon name="panel" /></button>
        <span class="sep"></span>
        <span class="crumb">Map</span>
        <div class="tools">
          <button type="button" aria-label="Notifications"><Icon name="bell" /></button>
          <button type="button" aria-label="Language"><Icon name="languages" /></button>
          <button type="button" aria-label="Theme"><Icon name="sun" /></button>
        </div>
      </header>

      <div class="content">
        <h1>Map</h1>
        <p class="sub">Area → building → unit, connected to operational data</p>

        <div class="filters">
          <div class="select">
            <select v-model="area" aria-label="Area">
              <option>All areas</option>
              <option v-for="a in areas" :key="a.name">{{ a.name }}</option>
            </select>
            <Icon name="chevron" />
          </div>
          <span v-for="a in areas" :key="a.name" class="pill">{{ a.name }} · {{ a.vacant }} vacant of {{ a.total }}</span>
        </div>

        <div class="map">
          <svg class="canvas" viewBox="21 21 3948 1344" preserveAspectRatio="xMidYMid slice" aria-hidden="true">
            <defs>
              <pattern id="st-a" width="30" height="20" patternUnits="userSpaceOnUse" patternTransform="rotate(8)">
                <rect width="30" height="20" fill="#dddbda" /><path d="M0 1H30M1 0V20" stroke="#cccac9" stroke-width="5" /><path d="M0 1H30M1 0V20" stroke="#f3f2f1" stroke-width="3" />
              </pattern>
              <pattern id="st-b" width="22" height="34" patternUnits="userSpaceOnUse" patternTransform="rotate(22)">
                <rect width="22" height="34" fill="#dedcdb" /><path d="M0 1H22M1 0V34" stroke="#cccac9" stroke-width="5" /><path d="M0 1H22M1 0V34" stroke="#f3f2f1" stroke-width="3" />
              </pattern>
              <pattern id="st-c" width="28" height="18" patternUnits="userSpaceOnUse" patternTransform="rotate(-32)">
                <rect width="28" height="18" fill="#dcdad9" /><path d="M0 1H28M1 0V18" stroke="#cccac9" stroke-width="5" /><path d="M0 1H28M1 0V18" stroke="#f3f2f1" stroke-width="3" />
              </pattern>
              <clipPath id="city"><path :d="urban" /></clipPath>
            </defs>
            <rect x="21" y="21" width="3948" height="1344" fill="#f2efe9" />
            <g clip-path="url(#city)">
              <rect x="21" y="100" width="3948" height="1270" fill="url(#st-a)" />
              <path d="M400 700L720 800 690 1370 350 1370ZM1900 100L2600 100 2600 500 2200 900 2120 600 1900 560ZM2300 900L2620 700 2640 1370 2200 1370ZM3500 900L3969 1000 3969 1370 3300 1370Z" fill="url(#st-b)" />
              <path d="M1490 300L1900 270 1880 560 1600 600ZM1260 900L1600 850 1600 1080 1260 1100ZM2700 200L3160 280 3160 600 2700 480ZM2130 420L2500 260 2560 480 2250 640ZM3200 1120L3520 1180 3300 1370 3100 1370Z" fill="url(#st-c)" />
              <path d="M2740 620L2860 540 3080 600 3060 770 2960 760ZM160 1010L260 1010 260 1150 160 1140ZM2050 1120L2140 1130 2110 1240 2060 1230ZM2220 1240L2340 1240 2340 1370 2220 1370Z" fill="#ebe8e3" />
              <path d="M1710 600L1900 600 1860 760 1800 760ZM700 1230L800 1240 780 1340 700 1320ZM1620 1230L1720 1240 1700 1330 1620 1340ZM2900 500L3140 600 2980 600Z" fill="#d3d2d1" />
              <path v-for="(p, i) in patches" :key="i" :d="p.d" :fill="p.fill" />
              <path :d="lanes" fill="none" stroke="#cfcdcc" stroke-width="7" />
              <path :d="lanes" fill="none" stroke="#ffffff" stroke-width="4" />
            </g>
            <g v-for="(l, li) in landcover" :key="'l' + li" :fill="l.fill">
              <g v-for="(o, i) in tiles" :key="i" :transform="pick(o)"><path v-for="d in l.sets[i]" :key="d" :d="d" /></g>
            </g>
            <path d="M3590 990Q3670 930 3770 1000Q3790 1030 3768 1135L3580 1128Z" fill="#dbcacf" stroke="#e3b3b8" stroke-width="3" />
            <path d="M3760 1140H3900" stroke="#bcb9c9" stroke-width="9" />
            <g fill="none" stroke-linecap="round" stroke-linejoin="round">
              <g stroke="#a5d0df" stroke-width="8"><g v-for="(o, i) in tiles" :key="i" :transform="pick(o)"><path v-for="d in river[i]" :key="d" :d="d" /></g></g>
              <g stroke="#a5d6e2" stroke-width="4"><g v-for="(o, i) in tiles" :key="i" :transform="pick(o)"><path v-for="d in stream[i]" :key="d" :d="d" /></g></g>
              <path d="M1280 180L1310 340 1340 460" stroke="#97cfe2" stroke-width="6" stroke-dasharray="8 13" />
              <path d="M3550 440Q3570 480 3540 520L3530 590 3490 650M3570 470L3620 530 3690 540" stroke="#c9c6c3" stroke-width="4" />
              <g stroke="#bda6be" stroke-width="4" stroke-dasharray="14 9"><g v-for="(o, i) in tiles" :key="i" :transform="pick(o)"><path v-for="d in fineBorder[i]" :key="d" :d="d" /></g></g>
              <g v-for="(r, ri) in roads" :key="'r' + ri">
                <g :stroke="r.edge" :stroke-width="r.w + 3"><g v-for="(o, i) in tiles" :key="i" :transform="pick(o)"><path v-for="d in r.sets[i]" :key="d" :d="d" /></g></g>
                <g :stroke="r.fill" :stroke-width="r.w"><g v-for="(o, i) in tiles" :key="i" :transform="pick(o)"><path v-for="d in r.sets[i]" :key="d" :d="d" /></g></g>
              </g>
              <g stroke="#b5717c" stroke-width="4" stroke-dasharray="26 10"><g v-for="(o, i) in tiles" :key="i" :transform="pick(o)"><path v-for="d in express[i]" :key="d" :d="d" /></g></g>
              <path d="M3780 312L3830 308 3900 270 3965 245" stroke="#b5a75c" stroke-width="13" />
              <path d="M1820 770Q1870 730 1900 745L2040 775" stroke="#f0b5ae" stroke-width="10" stroke-dasharray="4 12" />
              <path d="M2025 990L2030 1362M2040 1000L2200 955" stroke="#a3a1a0" stroke-width="4" stroke-dasharray="24 8" />
              <g stroke="#b199b5" stroke-width="6" stroke-dasharray="42 12 10 12"><g v-for="(o, i) in tiles" :key="i" :transform="pick(o)"><path v-for="d in border[i]" :key="d" :d="d" /></g></g>
              <path v-for="d in lifts" :key="d" :d="d" stroke="#6b6b6b" stroke-width="4" />
              <path d="M1990 90L2020 150M2372 108L2400 145 2440 150" stroke="#7a7a7a" stroke-width="4" />
            </g>
            <circle v-for="(c, i) in liftDots" :key="'c' + i" :cx="c[0]" :cy="c[1]" r="6" />
            <rect x="1775" y="224" width="7" height="14" />
            <path v-for="(p, i) in peaks" :key="'p' + i" :d="`M${p[0]} ${p[1] - 12}l13 23h-26z`" fill="#d08448" />
            <path d="M3825 1133q5 0 5 9v8l18 13v6l-18-6v11l7 6v4l-12-3-12 3v-4l7-6v-11l-18 6v-6l18-13v-8q0-9 5-9z" fill="#8461c4" />
            <rect x="1637" y="378" width="110" height="60" rx="6" fill="#e3e8c3" />
            <g v-for="(s, i) in shields" :key="'s' + i">
              <rect :x="s[0] - 17 - s[2].length * 10" :y="s[1] - 30" :width="34 + s[2].length * 20" height="60" rx="6" :fill="shieldColors[s[3]][0]" :stroke="shieldColors[s[3]][1]" stroke-width="3" />
              <text class="shield" :x="s[0]" :y="s[1] + 12" :fill="shieldColors[s[3]][2]">{{ s[2] }}</text>
            </g>
            <text v-for="(p, i) in places" :key="'t' + i" class="place" :x="p[0]" :y="p[1]">{{ p[2] }}</text>
            <text class="place green" x="3017" y="880">بوستان</text>
            <text class="place green" x="3017" y="922">جنگلی لویزان</text>
            <text class="place purple" x="3390" y="232" transform="rotate(-23 3390 232)">بخش رودبار قصران</text>
            <text class="place purple" x="2815" y="674" transform="rotate(13 2815 674)">شهرستان شمیرانات</text>
            <text class="place purple" x="3760" y="752" transform="rotate(-35 3760 752)">بخش مرکزی شهرستان تهران</text>
          </svg>

          <div class="zoom">
            <button type="button" aria-label="Zoom in"><svg width="15" height="15" viewBox="0 0 30 30"><path d="M15 2v26M2 15h26" stroke="#000" stroke-width="4" /></svg></button>
            <button type="button" aria-label="Zoom out"><svg width="15" height="15" viewBox="0 0 30 30"><path d="M2 15h26" stroke="#000" stroke-width="4" /></svg></button>
          </div>
          <button v-for="m in markers" :key="m.label" type="button" class="marker" :style="pos(m)">{{ m.label }}</button>
          <div class="credit">
            <svg width="14" height="10" viewBox="0 0 14 10" aria-hidden="true"><path d="M0 0h14v5H0z" fill="#4c7be1" /><path d="M0 5h14v5H0z" fill="#ffd500" /></svg>
            <a href="#">Leaflet</a> | © <a href="#">OpenStreetMap</a>
          </div>
        </div>

        <h2 class="heading">Areas</h2>
        <div class="cards">
          <article v-for="b in buildings" :key="b.name" class="card">
            <h3><Icon name="grid" />{{ b.name }}</h3>
            <p class="addr"><Icon name="pin" :size="17" />{{ b.address }}</p>
            <div class="tags">
              <span class="tag ok">{{ b.vacant }}</span>
              <span class="tag info">Occupied: {{ b.occupied }}</span>
              <span v-if="b.out" class="tag bad">Out of service: {{ b.out }}</span>
            </div>
            <p v-if="b.note" class="note">{{ b.note }}</p>
          </article>
        </div>
      </div>
    </main>
  </div>
</template>

<style>
body { margin: 0; background: #fafafa; }
</style>

<style scoped>
* { box-sizing: border-box; }
h1, h2, h3, p { margin: 0; font-weight: 400; }
button { font: inherit; color: inherit; border: 0; padding: 0; background: none; cursor: pointer; }
a { color: inherit; text-decoration: none; }
.icon { flex: none; display: block; }
.app { display: flex; height: 100vh; overflow: hidden; background: #fafafa; color: #0a0a0a; font-family: Inter, "Liberation Sans", sans-serif; font-size: 16px; line-height: 24px; }

.sidebar { flex: 0 0 298px; display: flex; flex-direction: column; padding: 18px 18px 19px; }
.brand { display: flex; align-items: center; gap: 9px; height: 37px; padding: 0 8px; font-size: 19px; font-weight: 600; }
.new { display: flex; align-items: center; gap: 9px; height: 37px; margin: 19px 0 11px; padding: 0 10px; border-radius: 10px; background: #171717; color: #fafafa; }
.group { margin-bottom: 20px; }
.group h2 { padding: 0 10px; font-size: 14px; font-weight: 500; line-height: 37px; color: #6b6b6b; }
.group a { display: flex; align-items: center; gap: 9px; height: 37px; padding: 0 10px; border-radius: 10px; color: #171717; }
.group a.active { background: #f5f5f5; }
nav { flex: 1; min-height: 0; overflow: hidden; }
.user { display: flex; align-items: center; gap: 10px; height: 56px; padding: 0 9px 0 10px; }
.avatar { display: grid; place-items: center; width: 37px; height: 37px; border: 1px solid #e5e5e5; border-radius: 50%; background: #f5f5f5; color: #737373; }
.who { flex: 1; display: flex; flex-direction: column; }
.who strong { font-weight: 500; line-height: 22px; }
.who small { font-size: 14px; line-height: 18px; color: #737373; }

.panel { flex: 1; min-width: 0; margin: 10px 8px 0 0; border-radius: 16px 16px 0 0; background: #fff; box-shadow: 0 1px 3px rgba(0, 0, 0, .12); overflow: hidden; }
.bar { display: flex; align-items: center; height: 55px; padding: 0 39px 0 31px; border-bottom: 1px solid #e5e5e5; }
.sep { width: 1px; height: 19px; margin: 0 19px 0 25px; background: #e5e5e5; }
.crumb { font-size: 19px; font-weight: 500; }
.tools { display: flex; gap: 23px; margin-left: auto; }

.content { padding: 28px 29px; }
h1 { font-size: 23px; font-weight: 600; line-height: 34px; }
.sub { padding-top: 3px; color: #737373; }
.filters { display: flex; align-items: center; gap: 10px; margin: 37px 0 27px; }
.select { position: relative; width: 224px; margin-right: 4px; }
.select select { width: 100%; height: 38px; padding: 0 12px; border: 1px solid #e5e5e5; border-radius: 12px; background: #fff; color: inherit; font: inherit; appearance: none; }
.select svg { position: absolute; right: 11px; top: 9px; color: #737373; pointer-events: none; }
.pill, .tag { height: 23px; border: 1px solid #e5e5e5; border-radius: 12px; font-size: 13px; font-weight: 500; line-height: 21px; white-space: nowrap; }
.pill { padding: 0 12px; }
.tag { padding: 0 10px; }

.map { position: relative; height: 449px; border: 1px solid #e0dfdd; border-radius: 16px; overflow: hidden; background: #f2efe9; }
.canvas { display: block; width: 100%; height: 100%; }
.shield { font: 600 33px "Noto Sans", sans-serif; text-anchor: middle; }
.place { font: 36px "Noto Sans", "DejaVu Sans", sans-serif; text-anchor: middle; fill: #3c3c3c; paint-order: stroke; stroke: rgba(255, 255, 255, .6); stroke-width: 5px; }
.green { fill: #5f8a5c; }
.purple { fill: #a07fa8; }
.zoom { position: absolute; left: 12px; top: 12px; display: flex; flex-direction: column; border: 2px solid rgba(0, 0, 0, .25); border-radius: 5px; background: #fff; background-clip: padding-box; }
.zoom button { display: grid; place-items: center; width: 35px; height: 35px; }
.zoom button + button { border-top: 1px solid #ccc; }
.marker { position: absolute; width: 38px; height: 38px; margin: -19px 0 0 -7px; border: 2px solid #fff; border-radius: 50%; background: #059669; color: #fff; font: 700 14px/34px "Noto Sans", sans-serif; box-shadow: 0 1px 4px rgba(0, 0, 0, .4); }
.credit { position: absolute; right: 0; bottom: 0; display: flex; align-items: center; gap: 4px; height: 22px; padding: 0 6px; background: rgba(255, 255, 255, .8); color: #333; font: 14px/20px "Liberation Sans", sans-serif; }
.credit a { color: #0078a8; }

.heading { margin: 28px 0; font-size: 19px; font-weight: 600; line-height: 26px; }
.cards { display: grid; grid-template-columns: repeat(3, 1fr); gap: 17px; margin: 0 -1px; }
.card { padding: 13px 14px 14px; border: 1px solid #e5e5e5; border-radius: 18px; }
.card h3 { display: flex; align-items: center; gap: 9px; font-size: 16px; font-weight: 500; }
.addr { display: flex; align-items: center; gap: 4px; padding-top: 4px; color: #737373; }
.tags { display: flex; gap: 10px; padding-top: 13px; }
.tag.ok { color: #0d7a55; background: #e6f7ef; border-color: #a7e8cb; }
.tag.info { color: #1d5fa8; background: #e6f5fe; border-color: #a3dcfa; }
.tag.bad { color: #c11722; background: #feeaea; border-color: #fbb4b8; }
.note { padding-top: 10px; font-size: 14px; line-height: 20px; color: #737373; }
</style>
